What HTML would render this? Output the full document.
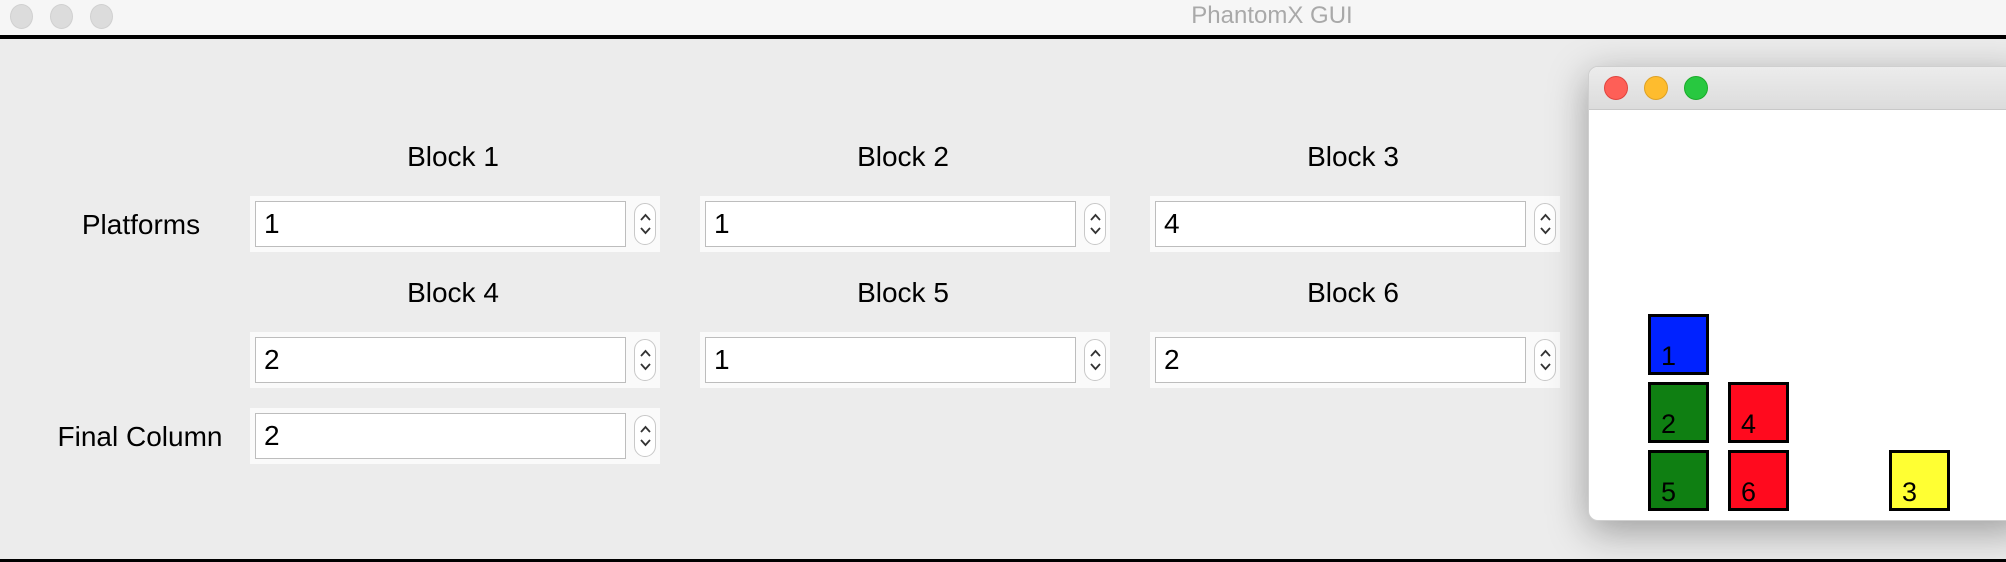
<!DOCTYPE html>
<html><head><style>
*{margin:0;padding:0;box-sizing:border-box}
body{width:2006px;height:562px;background:#ececec;position:relative;overflow:hidden;font-family:"Liberation Sans",sans-serif}
.tb{position:absolute;left:0;top:0;width:2006px;height:36px;background:#f6f6f6}
.tl{position:absolute;width:23px;height:25px;border-radius:50%;background:#dcdcdc;border:1px solid #d0d0d0;top:4px}
.title{position:absolute;left:1272px;top:2px;transform:translateX(-50%);color:#a9a9a9;font-size:24px}
.line{position:absolute;left:0;width:2006px;background:#000}
.lbl{position:absolute;font-size:28px;color:#000;transform:translate(-50%,-50%);white-space:nowrap}
.panel{position:absolute;width:410px;height:56px;background:#fafafa}
.inp{position:absolute;left:5px;top:5px;width:371px;height:46px;background:#fff;border:1.5px solid #bdbdbd;font-size:28px;padding-left:8px;line-height:43px}
.spin{position:absolute;left:384px;top:7px;width:22px;height:42px;border:1px solid #c8c8c8;border-radius:11px;background:#fff}
.spin svg{position:absolute;left:4px;top:7px}
.win{position:absolute;left:1588px;top:66px;width:440px;height:455px;background:#fff;border-radius:10px;box-shadow:0 10px 40px rgba(0,0,0,.35);overflow:hidden;border:1px solid #cfcfcf}
.wtb{height:43px;background:linear-gradient(#ececec,#dcdcdc);border-bottom:1px solid #c8c8c8;position:relative}
.wl{position:absolute;top:9px;width:24px;height:24px;border-radius:50%}
.blk{position:absolute;width:61px;height:61px;border:3px solid #000;font-size:27px;padding-left:10px;line-height:78px}
</style></head><body>
<div class="tb">
<div class="tl" style="left:10px"></div><div class="tl" style="left:50px"></div><div class="tl" style="left:90px"></div>
<div class="title">PhantomX GUI</div></div>
<div class="line" style="top:35px;height:4px"></div>
<div class="line" style="top:559px;height:3px"></div>

<div class="lbl" style="left:453px;top:157px">Block 1</div>
<div class="lbl" style="left:903px;top:157px">Block 2</div>
<div class="lbl" style="left:1353px;top:157px">Block 3</div>
<div class="lbl" style="left:453px;top:293px">Block 4</div>
<div class="lbl" style="left:903px;top:293px">Block 5</div>
<div class="lbl" style="left:1353px;top:293px">Block 6</div>
<div class="lbl" style="left:141px;top:225px">Platforms</div>
<div class="lbl" style="left:140px;top:437px">Final Column</div>

<div class="panel" style="left:250px;top:196px"><div class="inp">1</div><div class="spin"><svg width="13" height="26"><path d="M2 9L6.5 4L11 9M2 17L6.5 22L11 17" fill="none" stroke="#333" stroke-width="1.8"/></svg></div></div>
<div class="panel" style="left:700px;top:196px"><div class="inp">1</div><div class="spin"><svg width="13" height="26"><path d="M2 9L6.5 4L11 9M2 17L6.5 22L11 17" fill="none" stroke="#333" stroke-width="1.8"/></svg></div></div>
<div class="panel" style="left:1150px;top:196px"><div class="inp">4</div><div class="spin"><svg width="13" height="26"><path d="M2 9L6.5 4L11 9M2 17L6.5 22L11 17" fill="none" stroke="#333" stroke-width="1.8"/></svg></div></div>
<div class="panel" style="left:250px;top:332px"><div class="inp">2</div><div class="spin"><svg width="13" height="26"><path d="M2 9L6.5 4L11 9M2 17L6.5 22L11 17" fill="none" stroke="#333" stroke-width="1.8"/></svg></div></div>
<div class="panel" style="left:700px;top:332px"><div class="inp">1</div><div class="spin"><svg width="13" height="26"><path d="M2 9L6.5 4L11 9M2 17L6.5 22L11 17" fill="none" stroke="#333" stroke-width="1.8"/></svg></div></div>
<div class="panel" style="left:1150px;top:332px"><div class="inp">2</div><div class="spin"><svg width="13" height="26"><path d="M2 9L6.5 4L11 9M2 17L6.5 22L11 17" fill="none" stroke="#333" stroke-width="1.8"/></svg></div></div>
<div class="panel" style="left:250px;top:408px"><div class="inp">2</div><div class="spin"><svg width="13" height="26"><path d="M2 9L6.5 4L11 9M2 17L6.5 22L11 17" fill="none" stroke="#333" stroke-width="1.8"/></svg></div></div>

<div class="win"><div class="wtb">
<div class="wl" style="left:15px;background:#fe5f57;border:1px solid #e0443e"></div>
<div class="wl" style="left:55px;background:#febc2e;border:1px solid #dea123"></div>
<div class="wl" style="left:95px;background:#28c840;border:1px solid #1aab29"></div>
</div></div>
<div class="blk" style="left:1648px;top:314px;background:#0022ff">1</div>
<div class="blk" style="left:1648px;top:382px;background:#0f7f12">2</div>
<div class="blk" style="left:1728px;top:382px;background:#ff0a1e">4</div>
<div class="blk" style="left:1648px;top:450px;background:#0f7f12">5</div>
<div class="blk" style="left:1728px;top:450px;background:#ff0a1e">6</div>
<div class="blk" style="left:1889px;top:450px;background:#ffff33">3</div>
</body></html>
